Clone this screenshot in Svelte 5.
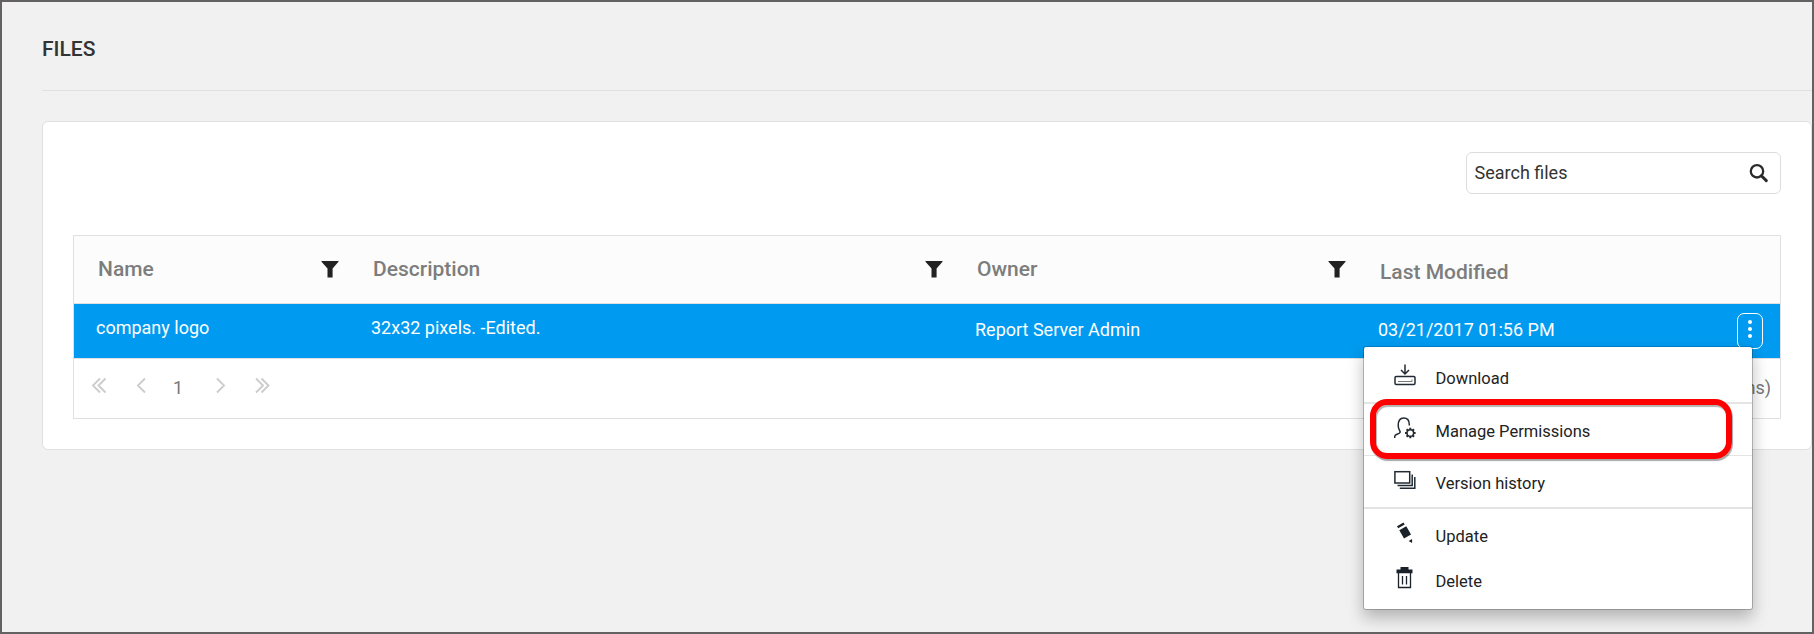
<script>
  const columns = ['Name', 'Description', 'Owner'];
</script>

{#snippet funnel()}
  <svg class="funnel" width="18" height="18" viewBox="0 0 18 18"><path d="M.5 1h17v.8L11.6 8.5V17.500H6.500V8.500L.5 1.800z" fill="#222" /></svg>
{/snippet}

<main>
  <header><h1>FILES</h1></header>
  <section class="card">
    <div class="tools">
      <label class="search">
        <span>Search files</span>
        <svg width="20" height="20" viewBox="0 0 20 20" fill="none" stroke="#2b2b2b">
          <circle cx="8" cy="8.300" r="6.200" stroke-width="2.300" />
          <path d="M12.400 12.700l4.900 4.900" stroke-width="3" stroke-linecap="round" />
        </svg>
      </label>
    </div>
    <div class="table">
      <div class="grid head">
        {#each columns as c}
          <div class="cell"><span>{c}</span>{@render funnel()}</div>
        {/each}
        <div class="cell last"><span>Last Modified</span></div>
      </div>
      <div class="grid row">
        <div class="cell"><span class="name">company logo</span></div>
        <div class="cell"><span class="desc">32x32 pixels. -Edited.</span></div>
        <div class="cell low"><span class="owner">Report Server Admin</span></div>
        <div class="cell low">
          <span class="date">03/21/2017 01:56 PM</span>
          <button class="kebab" aria-label="Options"><i></i><i></i><i></i></button>
        </div>
      </div>
      <div class="pager">
        <svg width="190" height="20" viewBox="0 0 190 20" fill="none" stroke="#ccc" stroke-width="1.900">
          <path d="M9 3.500L2 10.500l7 7M14.500 3.500L7.500 10.500l7 7M54 3.500l-7 7 7 7M126 3.500l7 7-7 7M165 3.500l7 7-7 7M170.500 3.500l7 7-7 7" />
        </svg>
        <span class="page">1</span>
        <span class="total">1 of 1 pages (1 items)</span>
      </div>
    </div>
  </section>

  <nav class="menu">
    <div class="item a">
      <svg width="22" height="22" viewBox="0 0 22 22" fill="none" stroke="#222b33" stroke-width="1.500">
        <path d="M11 .5v9M7 6l4 4 4-4" />
        <rect x="1" y="12.500" width="20" height="8" rx="1.200" />
        <path d="M4 17.500h14v-2" stroke="#777" stroke-width="1" />
      </svg><span>Download</span>
    </div>
    <div class="item b">
      <svg width="22" height="22" viewBox="0 0 22 22" fill="none" stroke="#222b33" stroke-width="1.500">
        <path d="M.7 21v-1.500c.2-1.200 1-1.800 2.300-2.300 2-.7 3.200-1.200 3.200-2.300 0-1-2-2.200-2-6.400C4.200 4 6.200 1 9.700 1s5.600 2.500 5.600 6.500V8.500" />
        <circle cx="16.300" cy="16" r="3.300" />
        <path d="M16.300 10.700v2M16.300 19.300v2M11 16h2M19.600 16h2M12.600 12.300l1.400 1.400M18.600 18.300l1.400 1.400M12.600 19.700l1.400-1.400M18.600 13.700l1.400-1.400" stroke-width="2" />
      </svg><span>Manage Permissions</span>
    </div>
    <div class="item c">
      <svg width="22" height="22" viewBox="0 0 22 22" fill="none" stroke="#222b33" stroke-width="1.500">
        <rect x=".9" y="1.700" width="14.800" height="11.300" />
        <path d="M3.500 15.400h14.700V4.500" /><path d="M5.800 18.200h15V7" />
      </svg><span>Version history</span>
    </div>
    <div class="item d">
      <svg width="22" height="22" viewBox="0 0 22 22" fill="#1b2128">
        <path d="M3 4.200L9.500 .5l1.200 2-6.500 3.700zM5.300 8.200l7-4 4.700 8.300-7 4zM14.600 19l3.500-2v4z" />
      </svg><span>Update</span>
    </div>
    <div class="item e">
      <svg width="22" height="22" viewBox="0 0 22 22" fill="none" stroke="#1b2128">
        <path d="M6.500 0h8v2.500h4v3.800h-16V2.500h4z" fill="#1b2128" stroke="none" />
        <path d="M4.500 6v14.500h12V6M8.500 9v8.500M12.500 9v8.500" stroke-width="1.300" />
      </svg><span>Delete</span>
    </div>
    <div class="highlight"></div>
  </nav>
</main>

<style>
  :global(body) { margin: 0; }
  main {
    box-sizing: border-box; position: relative; width: 1814px; height: 634px; overflow: hidden;
    border: 2px solid #636162; background: #f1f1f1; padding-left: 40px;
    font-family: Roboto, sans-serif; color: #333;
  }
  main * { box-sizing: border-box; }
  span { white-space: nowrap; }
  header { height: 89px; border-bottom: 1px solid #e0e0e0; padding-top: 34px; }
  h1 { margin: 0; font-size: 21px; line-height: 26px; font-weight: 500; }
  .card {
    margin-top: 30px; height: 329px; border: 1px solid #e0e0e0; border-radius: 6px;
    background: #fff; padding: 30px 30px 0;
  }
  .tools { display: flex; justify-content: flex-end; height: 83px; }
  .search {
    display: flex; justify-content: space-between; align-items: center; width: 315px; height: 42px;
    border: 1px solid #ddd; border-radius: 6px; padding: 0 11.500px 0 7.500px; font-size: 18px;
  }
  .search span { padding-bottom: 2px; }
  .table { border: 1px solid #e0e0e0; height: 184px; width: 1708px; }
  .grid { display: grid; grid-template-columns: 274px 604px 403px 1fr; }
  .head {
    height: 68px; border-bottom: 1px solid #e0e0e0; background: #fcfcfc;
    font-size: 21px; font-weight: 500; color: #7d7d7d;
  }
  .head .cell { display: flex; justify-content: space-between; align-items: flex-start; padding: 20px 9px 0 25px; line-height: 26px; }
  .head .cell:first-child { padding-left: 24px; }
  .head .cell.last { padding-top: 23px; }
  .funnel { margin-top: 4px; }
  .row { height: 55px; border-bottom: 1px solid #e0e0e0; background: #009bf0; color: #fff; font-size: 18px; font-weight: 400; }
  .row .cell { display: flex; justify-content: space-between; align-items: flex-start; padding: 12px 17px 0 23px; line-height: 24px; }
  .row .cell:first-child { padding-left: 22px; }
  .row .low { padding-top: 14px; }
  .kebab {
    width: 26px; height: 36px; margin: -5px 0 0; border: 1px solid #fff; border-radius: 7px; background: none;
    display: flex; flex-direction: column; align-items: center; gap: 3px; padding: 6px 0 0;
  }
  .kebab i { width: 4px; height: 4px; border-radius: 2px; background: #fff; }
  .pager { display: flex; padding: 16px 9px 0 17px; color: #777; font-size: 18px; line-height: 24px; }
  .page { margin: 1px 0 0 -108px; }
  .total { margin: 1px 0 0 auto; }
  .menu {
    position: absolute; left: 1361px; top: 344px; width: 390px; height: 264px;
    background: #fff; background-clip: padding-box; border: 1px solid rgba(0,0,0,.22); border-top-color: rgba(0,0,0,.15);
    border-radius: 3px; box-shadow: 0 8px 16px rgba(0,0,0,.25); font-size: 16.500px; color: #222;
  }
  .item { display: flex; align-items: flex-start; line-height: 24px; padding-left: 29.500px; }
  .item span { margin-left: 20px; }
  .a { height: 57px; border-bottom: 2px solid #e4e4e4; padding-top: 17px; }
  .a span { margin-top: 3px; }
  .b { height: 52px; border-bottom: 1px solid #e4e4e4; padding-top: 13px; }
  .b span { margin-top: 3px; }
  .c { height: 53px; border-bottom: 2px solid #e4e4e4; padding-top: 14px; }
  .c span { margin-top: 2px; }
  .d { height: 45px; padding-top: 13px; }
  .d span { margin-top: 3px; }
  .e { height: 45px; padding-top: 13px; }
  .e span { margin-top: 3px; }
  .highlight {
    position: absolute; left: 6px; top: 52px; width: 362px; height: 60px; border: 6px solid #f00;
    border-radius: 17px; box-shadow: 1px 2px 1px rgba(0,0,0,.35), inset 1px 2px 1px rgba(0,0,0,.3);
  }
</style>
